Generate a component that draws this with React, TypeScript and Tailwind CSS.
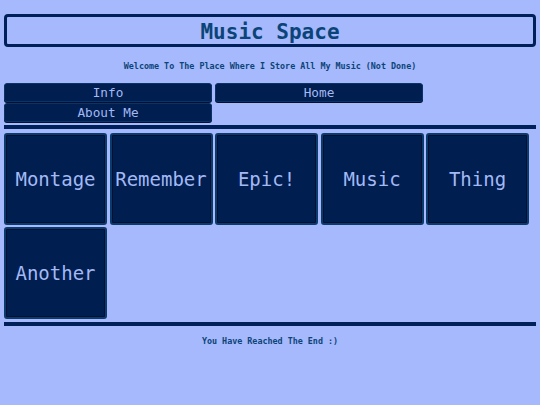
const tiles = ['Montage', 'Remember', 'Epic!', 'Music', 'Thing', 'Another'];
const navButtons = ['Info', 'Home', 'About Me'];

const mono = "font-['DejaVu_Sans_Mono',monospace]";

export default function App() {
  return (
    <div className={`min-h-[405px] bg-[#a6b9fc] px-[4px] pt-[14px] ${mono}`}>
      {/* Header */}
      <div className="flex h-[33px] items-center justify-center rounded-[4px] border-[3px] border-[#00205a] pt-[3px]">
        <h1 className="text-[21px] font-bold leading-none text-[#0b4478]">Music Space</h1>
      </div>
      <p className="mt-[15px] text-center text-[8.4px] font-bold leading-none text-[#0b4478]">
        Welcome To The Place Where I Store All My Music (Not Done)
      </p>

      {/* Nav */}
      <div className="mt-[13px] flex flex-wrap gap-x-[3px] gap-y-[1px]">
        {navButtons.map((label) => (
          <button
            key={label}
            className="h-[19px] w-[208px] rounded-[3px] border border-[#0a3468] bg-[#001e50] text-[12.7px] leading-none text-[#a3b9f4] shadow-[0_1px_0_#00102e]"
          >
            {label}
          </button>
        ))}
      </div>

      <div className="mt-[3px] h-[4px] w-full bg-[#00205a]" />

      {/* Tiles */}
      <div className="mt-[4px] flex flex-wrap gap-x-[2.5px] gap-y-[2px]">
        {tiles.map((name) => (
          <div
            key={name}
            className="flex h-[92px] w-[103px] items-center justify-center rounded-[3px] border-2 border-[#0b3a6c] bg-[#001e50] shadow-[inset_0_0_0_1px_#001030]"
          >
            <span className="text-[19px] leading-none text-[#a3b9f4]">{name}</span>
          </div>
        ))}
      </div>

      <div className="mt-[3px] h-[4px] w-full bg-[#00205a]" />

      <p className="mt-[11px] text-center text-[8.4px] font-bold leading-none text-[#0b4478]">
        You Have Reached The End :)
      </p>
    </div>
  );
}
